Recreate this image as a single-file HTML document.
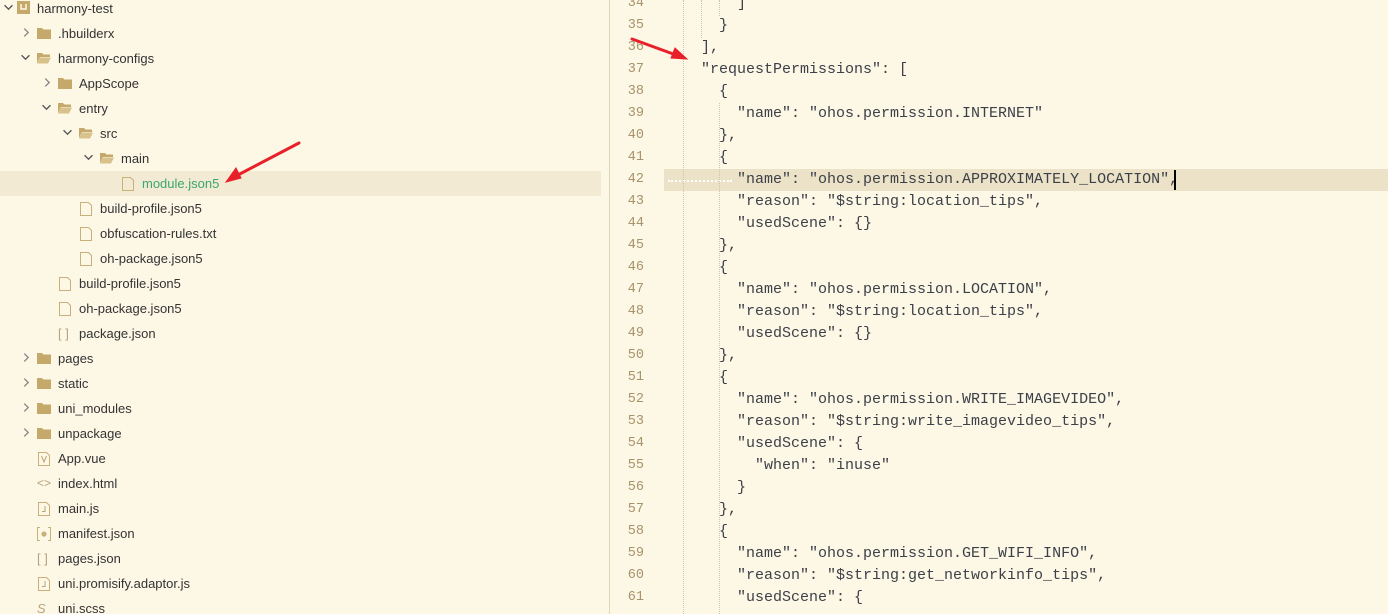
<!DOCTYPE html>
<html style="overflow:hidden"><head><meta charset="utf-8"><style>
html,body{margin:0;width:1388px;height:614px;overflow:hidden}
body{background:#fdf7e6;position:relative;font-family:"Liberation Sans",sans-serif}
.r{position:absolute;left:0;width:601px;height:25px;font-size:13px;color:#333;line-height:25px}
.r span.t{position:absolute;top:0}
.sel{background:#f2ead3}
.ic{position:absolute;top:6px}
.cv{position:absolute;top:7px}
#div{position:absolute;left:609px;top:0;width:1px;height:614px;background:#e0d6b8}
.ln{position:absolute;left:610px;width:34px;text-align:right;font:13.5px "Liberation Mono",monospace;color:#a8946a;height:22px;line-height:22px}
.cd{position:absolute;left:665px;font:15px "Liberation Mono",monospace;color:#3c4048;white-space:pre;height:22px;line-height:22px}
.g{position:absolute;width:0;border-left:1px dotted #cfc4a6}
</style></head><body>
<svg width="0" height="0" style="position:absolute"><defs>
<symbol id="fc" viewBox="0 0 14 12"><path d="M0 1h5l1.5 1.5H14V12H0z" fill="#c5a96b"/></symbol>
<symbol id="fo" viewBox="0 0 14 12"><path d="M0 1h5l1.5 1.5H13V5H3L0 11z" fill="#c5a96b"/><path d="M3 5.5h11l-3 6H0z" fill="#d9c18c"/></symbol>
<symbol id="ff" viewBox="0 0 12 14"><path d="M.5.5h8l3 3v10H.5z" fill="none" stroke="#c8b07a"/></symbol>
<symbol id="cd" viewBox="0 0 8 8"><path d="M.5 2l3.5 3.5L7.5 2" fill="none" stroke="#555" stroke-width="1.2"/></symbol>
<symbol id="cr" viewBox="0 0 8 8"><path d="M2 .5l3.5 3.5L2 7.5" fill="none" stroke="#888" stroke-width="1.2"/></symbol>
</defs></svg>

<div class="r" style="top:-4px"><svg class="cv" style="left:4px" width="9" height="9"><use href="#cd"/></svg><svg class="ic" style="left:17px;top:5px" width="13" height="13"><rect width="13" height="13" fill="#c5a96b"/><path d="M4 3v5h5V3" fill="none" stroke="#fdf7e6" stroke-width="1.5"/></svg><span class="t" style="left:37px">harmony-test</span></div>
<div class="r" style="top:21px"><svg class="cv" style="left:22px" width="9" height="9"><use href="#cr"/></svg><svg class="ic" style="left:37px" width="14" height="12"><use href="#fc"/></svg><span class="t" style="left:58px">.hbuilderx</span></div>
<div class="r" style="top:46px"><svg class="cv" style="left:21px" width="9" height="9"><use href="#cd"/></svg><svg class="ic" style="left:37px" width="14" height="12"><use href="#fo"/></svg><span class="t" style="left:58px">harmony-configs</span></div>
<div class="r" style="top:71px"><svg class="cv" style="left:43px" width="9" height="9"><use href="#cr"/></svg><svg class="ic" style="left:58px" width="14" height="12"><use href="#fc"/></svg><span class="t" style="left:79px">AppScope</span></div>
<div class="r" style="top:96px"><svg class="cv" style="left:42px" width="9" height="9"><use href="#cd"/></svg><svg class="ic" style="left:58px" width="14" height="12"><use href="#fo"/></svg><span class="t" style="left:79px">entry</span></div>
<div class="r" style="top:121px"><svg class="cv" style="left:63px" width="9" height="9"><use href="#cd"/></svg><svg class="ic" style="left:79px" width="14" height="12"><use href="#fo"/></svg><span class="t" style="left:100px">src</span></div>
<div class="r" style="top:146px"><svg class="cv" style="left:84px" width="9" height="9"><use href="#cd"/></svg><svg class="ic" style="left:100px" width="14" height="12"><use href="#fo"/></svg><span class="t" style="left:121px">main</span></div>
<div class="r sel" style="top:171px"><svg class="ic" style="left:122px" width="12" height="14"><use href="#ff"/></svg><span class="t" style="left:142px;color:#3aa76d">module.json5</span></div>
<div class="r" style="top:196px"><svg class="ic" style="left:80px" width="12" height="14"><use href="#ff"/></svg><span class="t" style="left:100px">build-profile.json5</span></div>
<div class="r" style="top:221px"><svg class="ic" style="left:80px" width="12" height="14"><use href="#ff"/></svg><span class="t" style="left:100px">obfuscation-rules.txt</span></div>
<div class="r" style="top:246px"><svg class="ic" style="left:80px" width="12" height="14"><use href="#ff"/></svg><span class="t" style="left:100px">oh-package.json5</span></div>
<div class="r" style="top:271px"><svg class="ic" style="left:59px" width="12" height="14"><use href="#ff"/></svg><span class="t" style="left:79px">build-profile.json5</span></div>
<div class="r" style="top:296px"><svg class="ic" style="left:59px" width="12" height="14"><use href="#ff"/></svg><span class="t" style="left:79px">oh-package.json5</span></div>
<div class="r" style="top:321px"><span class="t" style="left:58px;color:#b8a47a">[ ]</span><span class="t" style="left:79px">package.json</span></div>
<div class="r" style="top:346px"><svg class="cv" style="left:22px" width="9" height="9"><use href="#cr"/></svg><svg class="ic" style="left:37px" width="14" height="12"><use href="#fc"/></svg><span class="t" style="left:58px">pages</span></div>
<div class="r" style="top:371px"><svg class="cv" style="left:22px" width="9" height="9"><use href="#cr"/></svg><svg class="ic" style="left:37px" width="14" height="12"><use href="#fc"/></svg><span class="t" style="left:58px">static</span></div>
<div class="r" style="top:396px"><svg class="cv" style="left:22px" width="9" height="9"><use href="#cr"/></svg><svg class="ic" style="left:37px" width="14" height="12"><use href="#fc"/></svg><span class="t" style="left:58px">uni_modules</span></div>
<div class="r" style="top:421px"><svg class="cv" style="left:22px" width="9" height="9"><use href="#cr"/></svg><svg class="ic" style="left:37px" width="14" height="12"><use href="#fc"/></svg><span class="t" style="left:58px">unpackage</span></div>
<div class="r" style="top:446px"><svg class="ic" style="left:38px" width="12" height="14"><use href="#ff"/><path d="M3.5 4l2.5 6 2.5-6" fill="none" stroke="#b8a47a"/></svg><span class="t" style="left:58px">App.vue</span></div>
<div class="r" style="top:471px"><span class="t" style="left:37px;color:#b8a47a;font-size:12px">&lt;&gt;</span><span class="t" style="left:58px">index.html</span></div>
<div class="r" style="top:496px"><svg class="ic" style="left:38px" width="12" height="14"><use href="#ff"/><path d="M7 4v5.5H4" fill="none" stroke="#b8a47a"/></svg><span class="t" style="left:58px">main.js</span></div>
<div class="r" style="top:521px"><svg class="ic" style="left:37px" width="14" height="14"><path d="M3 .5H.5v13H3M11 .5h2.5v13H11" fill="none" stroke="#c8b07a"/><circle cx="7" cy="7" r="2.6" fill="#c8b07a"/></svg><span class="t" style="left:58px">manifest.json</span></div>
<div class="r" style="top:546px"><span class="t" style="left:37px;color:#b8a47a">[ ]</span><span class="t" style="left:58px">pages.json</span></div>
<div class="r" style="top:571px"><svg class="ic" style="left:38px" width="12" height="14"><use href="#ff"/><path d="M7 4v5.5H4" fill="none" stroke="#b8a47a"/></svg><span class="t" style="left:58px">uni.promisify.adaptor.js</span></div>
<div class="r" style="top:596px"><span class="t" style="left:37px;color:#b8a47a;font-style:italic">S</span><span class="t" style="left:58px">uni.scss</span></div>

<div id="div"></div>
<div style="position:absolute;left:664px;top:169px;width:724px;height:22px;background:#ebe2c8"></div>
<div style="position:absolute;left:668px;top:180px;width:64px;border-top:2px dotted #fff"></div>
<div style="position:absolute;left:1174px;top:170px;width:2px;height:20px;background:#000"></div>
<div class="g" style="left:683px;top:0;height:614px"></div>
<div class="g" style="left:701px;top:0;height:38px"></div>
<div class="g" style="left:719px;top:0;height:16px"></div>
<div class="g" style="left:719px;top:103px;height:511px"></div>

<div class="ln" style="top:-7px">34</div><div class="cd" style="top:-7px">        ]</div>
<div class="ln" style="top:15px">35</div><div class="cd" style="top:15px">      }</div>
<div class="ln" style="top:37px">36</div><div class="cd" style="top:37px">    ],</div>
<div class="ln" style="top:59px">37</div><div class="cd" style="top:59px">    "requestPermissions": [</div>
<div class="ln" style="top:81px">38</div><div class="cd" style="top:81px">      {</div>
<div class="ln" style="top:103px">39</div><div class="cd" style="top:103px">        "name": "ohos.permission.INTERNET"</div>
<div class="ln" style="top:125px">40</div><div class="cd" style="top:125px">      },</div>
<div class="ln" style="top:147px">41</div><div class="cd" style="top:147px">      {</div>
<div class="ln" style="top:169px">42</div><div class="cd" style="top:169px">        "name": "ohos.permission.APPROXIMATELY_LOCATION",</div>
<div class="ln" style="top:191px">43</div><div class="cd" style="top:191px">        "reason": "$string:location_tips",</div>
<div class="ln" style="top:213px">44</div><div class="cd" style="top:213px">        "usedScene": {}</div>
<div class="ln" style="top:235px">45</div><div class="cd" style="top:235px">      },</div>
<div class="ln" style="top:257px">46</div><div class="cd" style="top:257px">      {</div>
<div class="ln" style="top:279px">47</div><div class="cd" style="top:279px">        "name": "ohos.permission.LOCATION",</div>
<div class="ln" style="top:301px">48</div><div class="cd" style="top:301px">        "reason": "$string:location_tips",</div>
<div class="ln" style="top:323px">49</div><div class="cd" style="top:323px">        "usedScene": {}</div>
<div class="ln" style="top:345px">50</div><div class="cd" style="top:345px">      },</div>
<div class="ln" style="top:367px">51</div><div class="cd" style="top:367px">      {</div>
<div class="ln" style="top:389px">52</div><div class="cd" style="top:389px">        "name": "ohos.permission.WRITE_IMAGEVIDEO",</div>
<div class="ln" style="top:411px">53</div><div class="cd" style="top:411px">        "reason": "$string:write_imagevideo_tips",</div>
<div class="ln" style="top:433px">54</div><div class="cd" style="top:433px">        "usedScene": {</div>
<div class="ln" style="top:455px">55</div><div class="cd" style="top:455px">          "when": "inuse"</div>
<div class="ln" style="top:477px">56</div><div class="cd" style="top:477px">        }</div>
<div class="ln" style="top:499px">57</div><div class="cd" style="top:499px">      },</div>
<div class="ln" style="top:521px">58</div><div class="cd" style="top:521px">      {</div>
<div class="ln" style="top:543px">59</div><div class="cd" style="top:543px">        "name": "ohos.permission.GET_WIFI_INFO",</div>
<div class="ln" style="top:565px">60</div><div class="cd" style="top:565px">        "reason": "$string:get_networkinfo_tips",</div>
<div class="ln" style="top:587px">61</div><div class="cd" style="top:587px">        "usedScene": {</div>

<svg style="position:absolute;left:0;top:0" width="1388" height="614">
<g stroke="#e8202a" stroke-width="3" fill="#e8202a" stroke-linecap="round">
<line x1="299" y1="143" x2="236" y2="176"/><path d="M226 182l10-14 5 10z" stroke-width="1"/>
<line x1="632" y1="39" x2="676" y2="55"/><path d="M687 59l-16-1 4-10z" stroke-width="1"/>
</g></svg>
</body></html>
